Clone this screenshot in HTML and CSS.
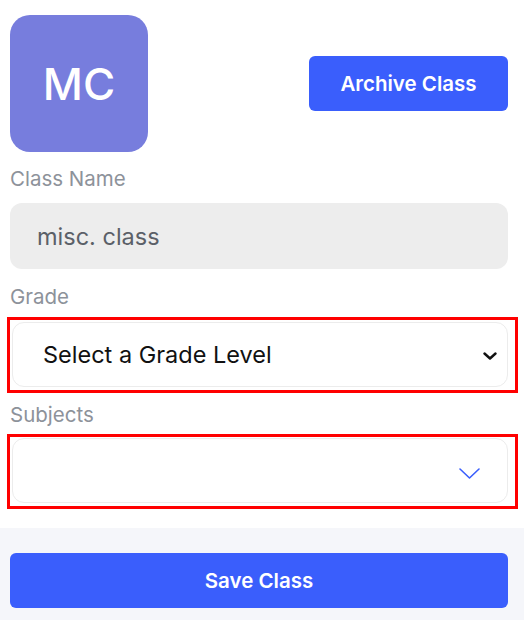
FILE: index.html
```html
<!DOCTYPE html>
<html>
<head>
<meta charset="utf-8">
<link rel="stylesheet" href="styles.css">
</head>
<body>
<div class="page">
  <div class="header">
    <div class="avatar">MC</div>
    <button class="btn btn-archive">Archive Class</button>
  </div>
  <label class="label label-name">Class Name</label>
  <div class="input">misc. class</div>
  <label class="label label-grade">Grade</label>
  <div class="highlight hl-grade">
    <div class="select select-grade">
      <span class="select-text">Select a Grade Level</span>
      <svg class="chev-black" width="14" height="8" viewBox="0 0 14 8"><path d="M1.5 1.5 L7 6.5 L12.5 1.5" fill="none" stroke="#111" stroke-width="2.4" stroke-linecap="round" stroke-linejoin="round"/></svg>
    </div>
  </div>
  <label class="label label-subjects">Subjects</label>
  <div class="highlight hl-subjects">
    <div class="select select-subjects">
      <svg class="chev-blue" width="21" height="11" viewBox="0 0 21 11"><path d="M1 1 L10.5 10 L20 1" fill="none" stroke="#3a5efc" stroke-width="1.6" stroke-linecap="round" stroke-linejoin="round"/></svg>
    </div>
  </div>
</div>
<div class="footer">
  <button class="btn btn-save">Save Class</button>
</div>
</body>
</html>
```

FILE: styles.css
```css
html, body {
  margin: 0;
  padding: 0;
  background: #ffffff;
  font-family: Inter, "Liberation Sans", sans-serif;
}
body {
  min-height: 620px;
  display: flex;
  flex-direction: column;
}
.page {
  padding: 15px 16px 19px 10px;
  display: flex;
  flex-direction: column;
}
.header {
  display: flex;
  justify-content: space-between;
  align-items: center;
}
.avatar {
  width: 138px;
  height: 137px;
  border-radius: 20px;
  background: #777ddd;
  color: #ffffff;
  font-size: 44px;
  font-weight: 500;
  display: flex;
  align-items: center;
  justify-content: center;
}
.btn {
  border: none;
  background: #3a5efc;
  color: #ffffff;
  font-family: Inter, "Liberation Sans", sans-serif;
  font-weight: 600;
  font-size: 20.5px;
  border-radius: 6px;
  padding: 0;
}
.btn-archive {
  width: 199px;
  height: 55px;
}
.label {
  display: block;
  font-size: 20.5px;
  line-height: 25px;
  color: #8d929a;
}
.label-name { margin-top: 14px; margin-bottom: 12px; }
.label-grade { margin-top: 15px; margin-bottom: 8px; }
.label-subjects { margin-top: 9px; margin-bottom: 7px; }
.input {
  height: 66px;
  border-radius: 12px;
  background: #ededed;
  color: #5b6068;
  font-size: 23.5px;
  display: flex;
  align-items: center;
  padding-left: 27px;
}
.highlight {
  border: 3px solid #ff0000;
  margin-left: -3px;
  margin-right: -10px;
  padding: 2px 7px 3px 2px;
}
.hl-subjects {
  padding-top: 1px;
}
.select {
  height: 63px;
  border: 1px solid #ececec;
  border-radius: 12px;
  background: #ffffff;
  display: flex;
  align-items: center;
}
.select-grade {
  justify-content: space-between;
  padding: 0 10px 0 30px;
}
.select-subjects {
  justify-content: flex-end;
  padding: 0 27px 0 30px;
}
.select-text {
  font-size: 23.5px;
  color: #111111;
}
.chev-black { display: block; margin-top: 2px; }
.chev-blue { display: block; margin-top: 6px; }
.footer {
  flex: 1;
  background: #f5f6fa;
  padding: 25px 16px 12px 10px;
}
.btn-save {
  width: 100%;
  height: 55px;
}
```
